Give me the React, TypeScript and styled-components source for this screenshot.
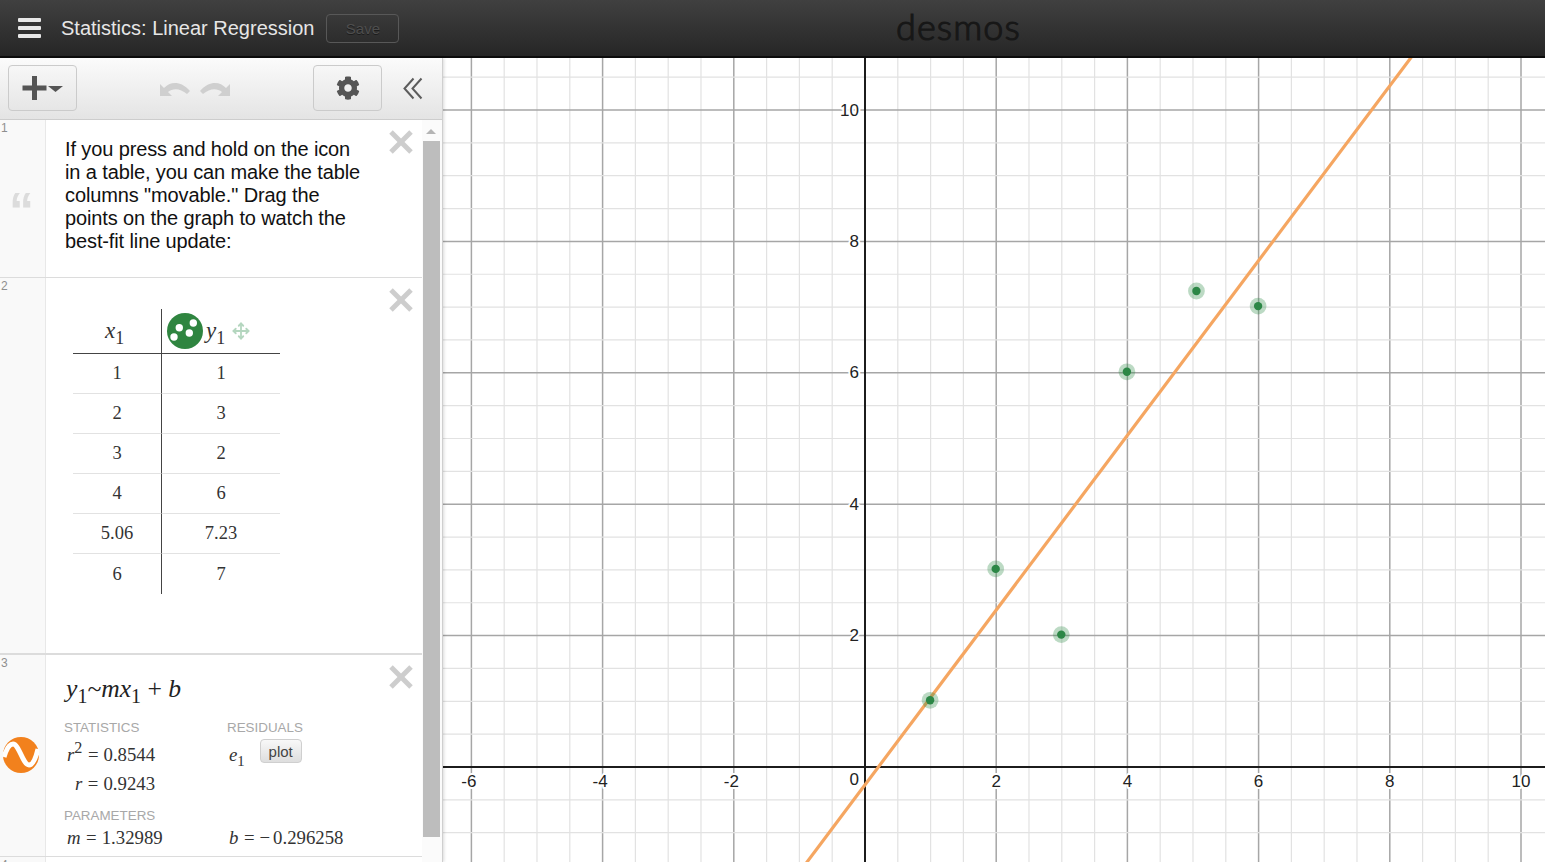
import React from "react";
import styled, { createGlobalStyle } from "styled-components";
import { FaCog } from "react-icons/fa";
import { Move } from "lucide-react";

const Global = createGlobalStyle`
  html, body { margin: 0; height: 100%; overflow: hidden; background: #fff; }
  #root { height: 100%; }
  * { box-sizing: border-box; }
`;

const Page = styled.div`
  height: 862px;
  display: flex;
  flex-direction: column;
  font-family: "Liberation Sans", Arial, sans-serif;
`;

const Header = styled.header`
  height: 58px;
  flex: none;
  display: grid;
  grid-template-columns: 896px 1fr;
  align-items: center;
  background: linear-gradient(#404040, #262626);
  border-bottom: 2px solid #0c0c0c;
`;

const HeaderLeft = styled.div`
  display: flex;
  align-items: center;
  padding-left: 18px;
`;

const Burger = styled.div`
  width: 23px;
  height: 20px;
  display: flex;
  flex-direction: column;
  justify-content: space-between;
  margin-right: 20px;
  span { display: block; height: 4px; background: #e8e8e8; border-radius: 1px; }
`;

const Title = styled.div`
  color: #e6e6e6;
  font-size: 20px;
  white-space: nowrap;
  margin-right: 12px;
`;

const SaveButton = styled.div`
  width: 73px;
  height: 29px;
  border: 1px solid #585858;
  border-radius: 4px;
  color: #4e4e4e;
  font-size: 15px;
  display: flex;
  align-items: center;
  justify-content: center;
  text-shadow: 0 1px 0 #1c1c1c;
`;

const Logo = styled.div`
  font-family: Lato, "Open Sans", sans-serif;
  font-weight: 300;
  font-size: 36px;
  letter-spacing: 1.1px;
  color: #171717;
  line-height: 1;
  padding-bottom: 5px;
  -webkit-text-stroke: 1.2px #171717;
`;

const Body = styled.div`
  flex: 1;
  display: flex;
  min-height: 0;
`;

const Panel = styled.aside`
  width: 443px;
  flex: none;
  display: flex;
  flex-direction: column;
  border-right: 1px solid #cfcfcf;
  box-shadow: 1px 0 3px rgba(0, 0, 0, 0.15);
  position: relative;
  z-index: 1;
  background: #fff;
`;

const Toolbar = styled.div`
  height: 62px;
  flex: none;
  display: grid;
  grid-template-columns: 69px 1fr 69px 60px;
  align-items: center;
  padding: 0 0 1px 8px;
  background: linear-gradient(#fbfbfb, #e4e4e4);
  border-bottom: 1px solid #cdcdcd;
`;

const ToolButton = styled.div`
  height: 46px;
  border: 1px solid #cbcbcb;
  border-radius: 4px;
  background: linear-gradient(#f7f7f7, #e6e6e6);
  display: flex;
  align-items: center;
  justify-content: center;
  color: #555;
`;

const UndoGroup = styled.div`
  display: flex;
  justify-content: center;
  gap: 10px;
  padding-right: 1px;
`;

const UndoSvg = styled.svg<{ $flip?: boolean }>`
  width: 30px;
  height: 17px;
  fill: #cfcfcf;
  transform: ${(p) => (p.$flip ? "scaleX(-1)" : "none")};
`;

const Collapse = styled.div`
  display: flex;
  justify-content: center;
  padding-left: 1px;
`;

const ChevronSvg = styled.svg`
  width: 20px;
  height: 23px;
  fill: none;
  stroke: #5c5c5c;
  stroke-width: 2;
`;

const ListArea = styled.div`
  flex: 1;
  display: flex;
  min-height: 0;
  overflow: hidden;
`;

const List = styled.div`
  flex: 1;
  min-width: 0;
  display: flex;
  flex-direction: column;
`;

const Row = styled.section<{ $h: number; $line?: number }>`
  height: ${(p) => p.$h}px;
  flex: none;
  display: flex;
  position: relative;
  border-bottom: ${(p) => p.$line ?? 1}px solid #dcdcdc;
`;

const Gutter = styled.div`
  width: 46px;
  flex: none;
  position: relative;
  background: #f9f9f9;
  border-right: 1px solid #e8e8e8;
  display: flex;
  align-items: center;
  justify-content: center;
`;

const RowNumber = styled.span`
  position: absolute;
  top: 1px;
  left: 1px;
  font-size: 12px;
  color: #8f8f8f;
`;

const QuoteMark = styled.span`
  font-family: "Liberation Sans", Arial, sans-serif;
  font-weight: 700;
  font-size: 50px;
  line-height: 1;
  height: 50px;
  color: #dcdcdc;
  margin-right: 2px;
  padding-top: 12px;
`;

const WaveIcon = styled.svg`
  width: 36px;
  height: 36px;
  margin: 0 4px 1px 0;
`;

const NoteText = styled.p`
  margin: 0;
  padding: 18px 57px 0 19px;
  font-size: 20px;
  line-height: 23px;
  color: #111;
  letter-spacing: -0.12px;
`;

const CloseIcon = styled.svg`
  position: absolute;
  top: 10px;
  right: 9px;
  width: 24px;
  height: 24px;
  stroke: #cdcdcd;
  stroke-width: 5;
`;

const TableWrap = styled.div`
  padding: 31px 0 0 27px;
`;

const Table = styled.div`
  display: grid;
  grid-template-columns: 89px 118px;
  grid-template-rows: 45px repeat(6, 40px);
  font-family: "Liberation Serif", serif;
  font-size: 18.5px;
  color: #333;
`;

const Cell = styled.div<{ $first?: boolean; $last?: boolean }>`
  display: flex;
  align-items: center;
  justify-content: center;
  border-right: ${(p) => (p.$first ? "1px solid #444" : "none")};
  border-bottom: ${(p) => (p.$last ? "none" : "1px solid #e2e2e2")};
`;

const HeadCell = styled.div<{ $first?: boolean }>`
  display: flex;
  align-items: center;
  justify-content: ${(p) => (p.$first ? "center" : "flex-start")};
  padding: ${(p) => (p.$first ? "0 5px 0 0" : "0 0 0 5px")};
  border-right: ${(p) => (p.$first ? "1px solid #444" : "none")};
  border-bottom: 1px solid #444;
  font-size: 23px;
  color: #333;
`;

const MathVar = styled.i`
  font-family: "Liberation Serif", serif;
`;

const Sub = styled.sub`
  font-style: normal;
  font-size: 0.78em;
  line-height: 0;
  vertical-align: -0.32em;
`;

const Sup = styled.sup`
  font-style: normal;
  font-size: 0.86em;
  line-height: 0;
  vertical-align: 0.5em;
`;

const Eq = styled.span`
  margin: 0 5px 0 5.5px;
`;

const Minus = styled.span`
  margin-right: 3px;
`;

const DotIcon = styled.svg`
  width: 36px;
  height: 36px;
  flex: none;
  margin-right: 3px;
`;

const MoveBadge = styled.span`
  display: inline-flex;
  color: #b4d6bf;
  margin-left: 7px;
`;

const Expression = styled.div`
  padding: 20px 0 0 20px;
  height: 64px;
  font-family: "Liberation Serif", serif;
  font-size: 25.6px;
  line-height: 28px;
  color: #222;
  white-space: pre;
`;

const StatGrid = styled.div`
  display: grid;
  grid-template-columns: 163px 1fr;
  padding-left: 18px;
  font-family: "Liberation Serif", serif;
  font-size: 18.8px;
  color: #333;
`;

const StatHead = styled.div<{ $top?: number; $bottom?: number }>`
  font-family: "Liberation Sans", Arial, sans-serif;
  font-size: 13.4px;
  line-height: 18px;
  color: #a8a8a8;
  margin-top: ${(p) => p.$top ?? 0}px;
  margin-bottom: ${(p) => p.$bottom ?? 0}px;
`;

const StatValue = styled.div<{ $h?: number; $indent?: number }>`
  height: ${(p) => p.$h ?? 29}px;
  padding-left: ${(p) => p.$indent ?? 3}px;
  display: flex;
  align-items: center;
  white-space: pre;
`;

const PlotButton = styled.div`
  width: 42px;
  height: 24px;
  margin: -7px 0 0 15px;
  border: 1px solid #cfcfcf;
  border-radius: 4px;
  background: linear-gradient(#f8f8f8, #dedede);
  font-family: "Liberation Sans", Arial, sans-serif;
  font-size: 15px;
  color: #444;
  display: flex;
  align-items: center;
  justify-content: center;
`;

const Scrollbar = styled.div`
  width: 20px;
  flex: none;
  display: flex;
  flex-direction: column;
  align-items: flex-start;
  background: #fbfbfb;
`;

const ScrollArrow = styled.div`
  width: 0;
  height: 0;
  margin: 9px 0 0 4px;
  border-left: 5px solid transparent;
  border-right: 5px solid transparent;
  border-bottom: 5px solid #b5b5b5;
`;

const ScrollThumb = styled.div`
  width: 17px;
  height: 696px;
  margin: 7px 0 0 1px;
  background: #bdbdbd;
`;

const GraphArea = styled.main`
  flex: 1;
  min-width: 0;
  background: #fff;
`;

const GraphSvg = styled.svg`
  display: block;
  width: 100%;
  height: 100%;
  font-family: "Liberation Sans", Arial, sans-serif;
`;

const AxisLabel = styled.text`
  font-size: 17px;
  fill: #222;
  stroke: #fff;
  stroke-width: 4px;
  paint-order: stroke;
  stroke-linejoin: round;
`;

const OX = 422;
const OY = 709;
const UX = 65.6;
const UY = 65.7;
const W = 1102;
const H = 804;
const px = (x: number) => OX + x * UX;
const py = (y: number) => OY - y * UY;

const range = (a: number, b: number) => {
  const out: number[] = [];
  for (let i = a; i <= b; i++) out.push(i);
  return out;
};

const xTicks = range(-13, 21).map((i) => i / 2);
const yTicks = range(-4, 22).map((i) => i / 2);
const points: [number, number][] = [[1, 1], [2, 3], [3, 2], [4, 6], [5.06, 7.23], [6, 7]];
const rows: [string, string][] = [["1", "1"], ["2", "3"], ["3", "2"], ["4", "6"], ["5.06", "7.23"], ["6", "7"]];

const Graph = () => {
  const lineY = (x: number) => 1.32989 * x - 0.296258;
  return (
    <GraphSvg viewBox={`0 0 ${W} ${H}`}>
      {xTicks.map((t) => {
        if (t === 0) return null;
        const major = t % 2 === 0;
        return <line key={t} x1={px(t)} x2={px(t)} y1={0} y2={H} stroke={major ? "#a6a6a6" : "#e2e2e2"} strokeWidth={major ? 1.5 : 1.2} />;
      })}
      {yTicks.map((t) => {
        if (t === 0) return null;
        const major = t % 2 === 0;
        return <line key={t} x1={0} x2={W} y1={py(t)} y2={py(t)} stroke={major ? "#a6a6a6" : "#e2e2e2"} strokeWidth={major ? 1.5 : 1.2} />;
      })}
      <line x1={px(0)} x2={px(0)} y1={0} y2={H} stroke="#1c1c1c" strokeWidth={2} />
      <line x1={0} x2={W} y1={py(0)} y2={py(0)} stroke="#1c1c1c" strokeWidth={2} />
      {[-6, -4, -2, 2, 4, 6, 8, 10].map((t) => (
        <AxisLabel key={t} x={px(t) - (t < 0 ? 2.5 : 0)} y={724} textAnchor="middle" dominantBaseline="middle" dy="0.5">
          {t}
        </AxisLabel>
      ))}
      {[2, 4, 6, 8, 10].map((t) => (
        <AxisLabel key={t} x={416} y={py(t) + 0.6} textAnchor="end" dominantBaseline="middle" dy="0.5">
          {t}
        </AxisLabel>
      ))}
      <AxisLabel x={416} y={723} textAnchor="end" dominantBaseline="middle">0</AxisLabel>
      <line x1={px(-1) - 0.5} y1={py(lineY(-1)) - 1} x2={px(9) - 0.5} y2={py(lineY(9)) - 1} stroke="#f5a661" strokeWidth={3.2} />
      {points.map(([x, y]) => (
        <g key={x}>
          <circle cx={px(x) - 0.5} cy={py(y) - 1} r={8.4} fill="#2e8b47" opacity={0.32} />
          <circle cx={px(x) - 0.5} cy={py(y) - 1} r={4.2} fill="#2c8746" />
        </g>
      ))}
    </GraphSvg>
  );
};

const Close = () => (
  <CloseIcon viewBox="0 0 24 24">
    <line x1="2" y1="2" x2="22" y2="22" />
    <line x1="22" y1="2" x2="2" y2="22" />
  </CloseIcon>
);

const Undo = ({ flip }: { flip?: boolean }) => (
  <UndoSvg viewBox="0 0 30 17" $flip={flip}>
    <path d="M0 16 L0 4 L4 8 C10 2 20 0 30 11 L27 14 C20 8 13 8 8 12 L12 16 Z" />
  </UndoSvg>
);

export default function App() {
  return (
    <Page>
      <Global />
      <Header>
        <HeaderLeft>
          <Burger><span /><span /><span /></Burger>
          <Title>Statistics: Linear Regression</Title>
          <SaveButton>Save</SaveButton>
        </HeaderLeft>
        <Logo>desmos</Logo>
      </Header>
      <Body>
        <Panel>
          <Toolbar>
            <ToolButton>
              <svg width="42" height="24" viewBox="0 0 42 24">
                <path d="M10 0h5v9.5h9.500v5H15V24h-5v-9.500H0.500v-5H10z" fill="#555" />
                <path d="M26 10h15l-7.500 6z" fill="#555" />
              </svg>
            </ToolButton>
            <UndoGroup>
              <Undo />
              <Undo flip />
            </UndoGroup>
            <ToolButton><FaCog size={24} /></ToolButton>
            <Collapse>
              <ChevronSvg viewBox="0 0 20 23">
                <path d="M10.500 1.500 L1.500 11.500 L10.500 21.500" />
                <path d="M18.500 1.500 L9.500 11.500 L18.500 21.500" />
              </ChevronSvg>
            </Collapse>
          </Toolbar>
          <ListArea>
            <List>
              <Row $h={158}>
                <Gutter>
                  <RowNumber>1</RowNumber>
                  <QuoteMark>“</QuoteMark>
                </Gutter>
                <NoteText>
                  If you press and hold on the icon in a table, you can make the table columns "movable." Drag the points on the graph to watch the best-fit line update:
                </NoteText>
                <Close />
              </Row>
              <Row $h={377} $line={2}>
                <Gutter>
                  <RowNumber>2</RowNumber>
                </Gutter>
                <TableWrap>
                  <Table>
                    <HeadCell $first>
                      <MathVar>x<Sub>1</Sub></MathVar>
                    </HeadCell>
                    <HeadCell>
                      <DotIcon viewBox="0 0 36 36">
                        <circle cx="18" cy="18" r="18" fill="#2f8540" />
                        <circle cx="12.300" cy="14.700" r="3.700" fill="#fff" />
                        <circle cx="26.300" cy="10" r="3.700" fill="#fff" />
                        <circle cx="22.300" cy="20" r="3.700" fill="#fff" />
                        <circle cx="7" cy="24" r="3.700" fill="#fff" />
                      </DotIcon>
                      <MathVar>y<Sub>1</Sub></MathVar>
                      <MoveBadge><Move size={18} strokeWidth={2.4} /></MoveBadge>
                    </HeadCell>
                    {rows.map(([a, b], i) => (
                      <React.Fragment key={i}>
                        <Cell $first $last={i === rows.length - 1}>{a}</Cell>
                        <Cell $last={i === rows.length - 1}>{b}</Cell>
                      </React.Fragment>
                    ))}
                  </Table>
                </TableWrap>
                <Close />
              </Row>
              <Row $h={202}>
                <Gutter>
                  <RowNumber>3</RowNumber>
                  <WaveIcon viewBox="0 0 36 36">
                    <circle cx="18" cy="18" r="18" fill="#f2811d" />
                    <path d="M1 20 C4 10 7 7 10 7 C16 7 20 28 26 28 C30 28 33 20 35 12" fill="none" stroke="#fff" strokeWidth="5" />
                  </WaveIcon>
                </Gutter>
                <div>
                  <Expression>
                    <MathVar>y<Sub>1</Sub>~mx<Sub>1</Sub></MathVar> + <MathVar>b</MathVar>
                  </Expression>
                  <StatGrid>
                    <StatHead $bottom={3}>STATISTICS</StatHead>
                    <StatHead $bottom={3}>RESIDUALS</StatHead>
                    <StatValue><MathVar>r<Sup>2</Sup></MathVar><Eq>=</Eq>0.8544</StatValue>
                    <StatValue $indent={2}>
                      <MathVar>e<Sub>1</Sub></MathVar>
                      <PlotButton>plot</PlotButton>
                    </StatValue>
                    <StatValue $indent={11}><MathVar>r</MathVar><Eq>=</Eq>0.9243</StatValue>
                    <div />
                    <StatHead $top={9}>PARAMETERS</StatHead>
                    <div />
                    <StatValue $h={26}><MathVar>m</MathVar><Eq>=</Eq>1.32989</StatValue>
                    <StatValue $h={26} $indent={2}><MathVar>b</MathVar><Eq>=</Eq><Minus>−</Minus>0.296258</StatValue>
                  </StatGrid>
                </div>
                <Close />
              </Row>
              <Row $h={40}>
                <Gutter>
                  <RowNumber>4</RowNumber>
                </Gutter>
              </Row>
            </List>
            <Scrollbar>
              <ScrollArrow />
              <ScrollThumb />
            </Scrollbar>
          </ListArea>
        </Panel>
        <GraphArea>
          <Graph />
        </GraphArea>
      </Body>
    </Page>
  );
}
